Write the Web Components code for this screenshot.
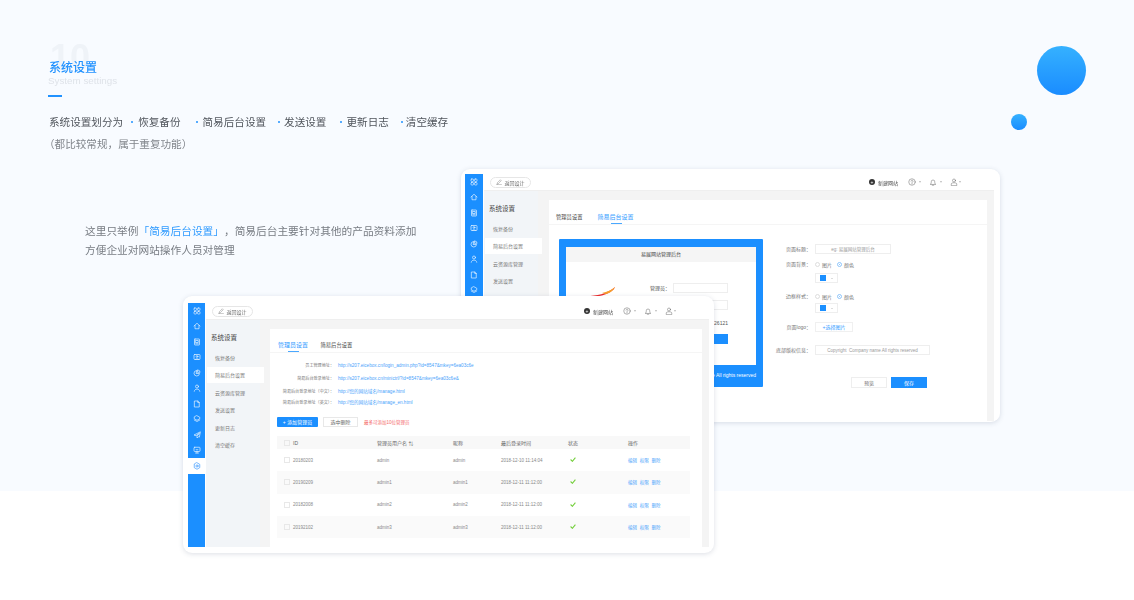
<!DOCTYPE html>
<html lang="zh-CN">
<head>
<meta charset="utf-8">
<title>系统设置</title>
<style>
  html, body { margin: 0; padding: 0; }
  body {
    width: 1134px; height: 600px; overflow: hidden; position: relative;
    font-family: "Liberation Sans", "Noto Sans CJK SC", sans-serif;
    background: linear-gradient(#f8fbff 0, #f8fbff 491px, #fff 491px);
  }
  #back { position: absolute; left: 461px; top: 169px; width: 539px; height: 253px; }
  #front { position: absolute; left: 183px; top: 296px; width: 531px; height: 257px; }
  .ball-a { position: absolute; left: 1037px; top: 46px; }
  .ball-b { position: absolute; left: 1011px; top: 114px; }
</style>
</head>
<body>
<section-intro></section-intro>
<deco-ball class="ball-a" size="49"></deco-ball>
<deco-ball class="ball-b" size="16"></deco-ball>

<admin-window id="back" active="-1" nav-active="1">
  <tab-strip slot="content" first="管理员设置" second="简易后台设置" active="1" height="25" left="7" gap="15"></tab-strip>
  <login-settings slot="content"></login-settings>
</admin-window>

<admin-window id="front" active="10" nav-active="1">
  <tab-strip slot="content" first="管理员设置" second="简易后台设置" active="0" height="24" left="8" gap="12.5"></tab-strip>
  <admin-list slot="content"></admin-list>
</admin-window>

<script>
const FONT = `"Liberation Sans", "Noto Sans CJK SC", sans-serif`
// 全角标点
const COLON = '\uFF1A', COMMA = '\uFF0C', LP = '\uFF08', RP = '\uFF09'

/* 图标都按 16x16 画,描边用 currentColor */
const ICONS = {
  grid: '<rect x="2" y="2" width="5" height="5" rx="1.5"/><rect x="9" y="2" width="5" height="5" rx="1.5"/><rect x="2" y="9" width="5" height="5" rx="1.5"/><rect x="9" y="9" width="5" height="5" rx="1.5"/>',
  home: '<path d="M2 8l6-5.5L14 8M4 7v6.5h8V7"/>',
  page: '<rect x="3" y="2" width="10" height="12" rx="1"/><rect x="5.5" y="5" width="5" height="4"/><path d="M5.5 11.5h5"/>',
  pic: '<rect x="2" y="3" width="12" height="10" rx="1.5"/><circle cx="8" cy="7" r="1.8"/><path d="M4 13c.6-2 7.4-2 8 0"/>',
  pie: '<path d="M7 3a5.5 5.5 0 1 0 6 6H7z"/><path d="M9.5 1.8a5 5 0 0 1 4.7 4.7H9.5z"/>',
  user: '<circle cx="8" cy="5" r="3"/><path d="M2.5 14.5c.5-6 10.5-6 11 0"/>',
  file: '<path d="M3.5 2h6l3 3v9h-9zM9.5 2v3h3"/>',
  layers: '<path d="M8 1.5l5.5 3v3L8 10.5l-5.5-3v-3zM2.5 10L8 13l5.5-3"/>',
  send: '<path d="M14 2L2 8l4 1.5L13 4l-5 6.5V14l2.5-2.5L12 12z"/>',
  chat: '<rect x="2" y="2.5" width="12" height="8.5" rx="1.5"/><path d="M8 11v3M5 14h6M6 6.5l2 2 2-2"/>',
  gear: '<path d="M8 1.5l5.5 3.2v6.6L8 14.5l-5.5-3.2V4.7z"/><circle cx="8" cy="8" r="2.2"/>',
  help: '<circle cx="8" cy="8" r="6.5"/><path d="M6 6.3c0-2.6 4-2.6 4 0 0 1.5-2 1.5-2 3.2M8 11v1"/>',
  bell: '<path d="M3 12.5c1.5-1 1.5-2.5 1.5-5a3.5 3.5 0 0 1 7 0c0 2.5 0 4 1.5 5zM6.5 14.5h3"/>',
  person: '<circle cx="8" cy="5" r="3"/><path d="M2.5 14.5V12c0-1.5 2-2.5 5.5-2.5s5.5 1 5.5 2.5v2.5z"/>',
  pen: '<path d="M3 13l1-3.5L11.5 2 14 4.5 6.5 12zM1.5 15h13"/>'
}
const icon = (name, size, width = 1.4) =>
  `<svg viewBox="0 0 16 16" width="${size}" height="${size}" fill="none" stroke="currentColor" stroke-width="${width}" stroke-linejoin="round" stroke-linecap="round">${ICONS[name]}</svg>`

class SectionIntro extends HTMLElement {
  constructor() {
    super()
    this.attachShadow({ mode: 'open' })
  }

  connectedCallback() {
    // [文字, 圆点到文字的距离, 到下一个圆点的距离]
    const items = [['恢复备份', 5, 15], ['简易后台设置', 5, 12], ['发送设置', 4, 14], ['更新日志', 4, 12], ['清空缓存', 3, 0]]
    this.shadowRoot.innerHTML = `
      <style>
        :host { display: block; padding: 41px 0 0 48px; font-family: ${FONT}; filter: blur(.25px); text-spacing-trim: space-all; }
        .no { font-size: 36px; line-height: 30px; height: 18px; padding: 2px 0 0 2px; font-weight: 700; color: #eff3f8; }
        h1 { position: relative; margin: 0; font-size: 12px; line-height: 14px; font-weight: 500; color: #2192ff; padding-left: 1px; }
        .en { position: relative; font-size: 9.8px; line-height: 14px; color: #dfe3e9; margin-top: -1px; }
        .rule { width: 14px; height: 2px; background: #2192ff; margin-top: 7px; }
        .line { display: flex; align-items: center; font-size: 10.6px; line-height: 16px; color: #50555c; margin: 17px 0 0 1px; }
        .lead { margin-right: 8px; }
        .dot { width: 2px; height: 2px; border-radius: 50%; background: #2192ff; flex: none; }
        .sub { font-size: 10.6px; line-height: 16px; color: #80858b; margin: 6px 0 0 -4px; }
        .desc { font-size: 10.7px; line-height: 19px; color: #777c83; margin: 70px 0 0 37px; }
        .desc b { font-weight: 400; color: #2f9bff; }
      </style>
      <div class="no">10</div>
      <h1>系统设置</h1>
      <div class="en">System settings</div>
      <div class="rule"></div>
      <div class="line">
        <span class="lead">系统设置划分为</span>
        ${items.map(([t, inner, gap]) => `<i class="dot" style="margin-right:${inner}px"></i><span style="margin-right:${gap}px">${t}</span>`).join('')}
      </div>
      <div class="sub">${LP}都比较常规${COMMA}属于重复功能${RP}</div>
      <div class="desc">这里只举例<b>「简易后台设置」</b>${COMMA}简易后台主要针对其他的产品资料添加<br>方便企业对网站操作人员对管理</div>
    `
  }
}

class DecoBall extends HTMLElement {
  constructor() {
    super()
    this.attachShadow({ mode: 'open' })
  }

  connectedCallback() {
    const size = this.getAttribute('size') || 16
    this.shadowRoot.innerHTML = `
      <style>
        :host { display: block; width: ${size}px; height: ${size}px; border-radius: 50%;
          background: linear-gradient(#35b1ff, #1a8cff); }
      </style>
    `
  }
}

class SideRail extends HTMLElement {
  constructor() {
    super()
    this.attachShadow({ mode: 'open' })
  }

  connectedCallback() {
    const active = Number(this.getAttribute('active'))
    const names = ['grid', 'home', 'page', 'pic', 'pie', 'user', 'file', 'layers', 'send', 'chat', 'gear']
    this.shadowRoot.innerHTML = `
      <style>
        :host { display: flex; flex-direction: column; align-items: stretch; background: #1b8fff; color: #e6f3ff; overflow: hidden; }
        div { height: 15.5px; display: flex; align-items: center; justify-content: center; flex: none; }
        div.on { background: #fff; color: #3d9bff; }
      </style>
      ${names.map((n, i) => `<div class="${i === active ? 'on' : ''}">${icon(n, 8)}</div>`).join('')}
    `
  }
}

class TopBar extends HTMLElement {
  constructor() {
    super()
    this.attachShadow({ mode: 'open' })
  }

  connectedCallback() {
    const caret = '<i class="caret"></i>'
    this.shadowRoot.innerHTML = `
      <style>
        :host { display: flex; align-items: center; height: 17px; background: #fff; padding: 0 0 0 6px; border-bottom: 1px solid #efefef;
          font-size: 5px; color: #555; box-sizing: border-box; }
        .pill { display: flex; align-items: center; justify-content: center; gap: 2px; width: 41px; height: 11px; box-sizing: border-box;
          border: 1px solid #e6e6e6; border-radius: 6px; color: #666; }
        .right { margin-left: auto; display: flex; align-items: center; color: #666; padding-right: 33px; }
        .plus { width: 6px; height: 6px; border-radius: 50%; background: #333; color: #fff; font-size: 5px; line-height: 6px; text-align: center; margin-right: 3px; }
        .new { margin-right: 10px; color: #444; }
        .caret { width: 0; height: 0; border: 1.5px solid transparent; border-top: 2px solid #bbb; border-bottom: 0; margin: 0 8px 0 3px; }
        .caret:last-child { margin-right: 0; margin-left: 1px; }
        svg { display: block; }
      </style>
      <div class="pill">${icon('pen', 6, 1)}<span>返回设计</span></div>
      <div class="right">
        <span class="plus">+</span><span class="new">新建网站</span>
        ${icon('help', 8, 1)}${caret}${icon('bell', 8, 1)}${caret}${icon('person', 8, 1)}${caret}
      </div>
    `
  }
}

class SideNav extends HTMLElement {
  constructor() {
    super()
    this.attachShadow({ mode: 'open' })
  }

  connectedCallback() {
    const active = Number(this.getAttribute('active'))
    const items = ['恢复备份', '简易后台设置', '云资源库管理', '发送设置', '更新日志', '清空缓存']
    this.shadowRoot.innerHTML = `
      <style>
        :host { display: block; background: #f2f5f8; font-size: 5px; color: #777; padding-top: 12.6px; }
        h2 { margin: 0 0 8.5px 5px; font-size: 6.5px; line-height: 9px; font-weight: 400; color: #444; }
        div { height: 15.5px; line-height: 16px; padding-left: 8px; margin: 0 -4px 1.9px 1px; }
        div.on { background: #fff; }
      </style>
      <h2>系统设置</h2>
      ${items.map((t, i) => `<div class="${i === active ? 'on' : ''}">${t}</div>`).join('')}
    `
  }
}

class AdminWindow extends HTMLElement {
  constructor() {
    super()
    this.attachShadow({ mode: 'open' })
  }

  connectedCallback() {
    const isBack = this.id === 'back'
    const padTop = isBack ? 5 : 7
    this.shadowRoot.innerHTML = `
      <style>
        :host { display: block; box-sizing: border-box; background: #fff; border-radius: 9px; padding: ${padTop}px 0 ${isBack ? 1 : 6}px ${isBack ? 4 : 5}px;
          box-shadow: 0 1px 5px rgba(60,80,110,.18); font-family: ${FONT}; overflow: hidden; filter: blur(.25px); }
        .frame { display: grid; grid-template-columns: ${isBack ? '18px' : '17px'} 1fr; column-gap: 1px; height: 100%; margin-right: ${isBack ? 6 : 5}px; }
        .main { display: flex; flex-direction: column; min-width: 0; min-height: 0; }
        .body { flex: 1; display: grid; grid-template-columns: 54px 1fr; min-height: 0; background: #f4f4f4; }
        .panel { background: #fff; margin: 9px 7px 0 ${isBack ? 11 : 10}px; min-height: 0; overflow: hidden; }
      </style>
      <div class="frame">
        <side-rail active="${this.getAttribute('active')}"></side-rail>
        <div class="main">
          <top-bar></top-bar>
          <div class="body">
            <side-nav active="${this.getAttribute('nav-active')}"></side-nav>
            <div class="panel"><slot name="content"></slot></div>
          </div>
        </div>
      </div>
    `
  }
}

class TabStrip extends HTMLElement {
  constructor() {
    super()
    this.attachShadow({ mode: 'open' })
  }

  connectedCallback() {
    const active = Number(this.getAttribute('active'))
    const tab = (text, i) => `<span class="tab ${i === active ? 'on' : ''}">${text}</span>`
    this.shadowRoot.innerHTML = `
      <style>
        :host { display: flex; align-items: center; gap: ${this.getAttribute('gap')}px; height: ${this.getAttribute('height')}px; box-sizing: border-box;
          padding: 9px 0 0 ${this.getAttribute('left')}px; border-bottom: 1px solid #f5f5f5; font-size: 5.3px; color: #444; }
        .tab { position: relative; line-height: 14px; }
        .on { color: #2f9bff; font-size: 6px; }
        .on::after { content: ''; position: absolute; left: 50%; margin-left: -5px; bottom: 0; width: 11px; height: 1px; background: #4aa8ff; }
      </style>
      ${tab(this.getAttribute('first'), 0)}${tab(this.getAttribute('second'), 1)}
    `
  }
}

class AdminList extends HTMLElement {
  constructor() {
    super()
    this.attachShadow({ mode: 'open' })
  }

  connectedCallback() {
    const urls = [
      [`员工管理地址${COLON}`, 'http://s207.eicebox.cn/login_admin.php?id=8547&mkey=6ea03c6e', 13],
      [`简易后台登录地址${COLON}`, 'http://s207.eicebox.cn/minictrl/?id=8547&mkey=6ea03c6e&', 12.5],
      [`简易后台登录地址${LP}中文${RP}${COLON}`, 'http://您的网站域名/manage.html', 11.5],
      [`简易后台登录地址${LP}英文${RP}${COLON}`, 'http://您的网站域名/manage_en.html', 11]
    ]
    const rows = [
      ['20180203', 'admin', 'admin', '2018-12-10 11:14:04'],
      ['20190209', 'admin1', 'admin1', '2018-12-11 11:12:00'],
      ['20182008', 'admin2', 'admin2', '2018-12-11 11:12:00'],
      ['20192102', 'admin3', 'admin3', '2018-12-11 11:12:00']
    ]
    const check = '<svg viewBox="0 0 10 8" width="6" height="5" fill="none" stroke="#74cf3c" stroke-width="1.8" style="margin-left:2px"><path d="M1 4l3 3 5-6"/></svg>'
    this.shadowRoot.innerHTML = `
      <style>
        :host { display: block; padding: 7px 12px 0 7px; font-size: 4.5px; color: #777; }
        .url { display: grid; grid-template-columns: 57px 1fr; column-gap: 4px; }
        .url span:first-child { text-align: right; color: #777; font-size: 4.1px; white-space: nowrap; }
        .url a { color: #4aa3fb; white-space: nowrap; font-size: 4.6px; }
        .url > * { line-height: 12px; height: var(--h); }
        .tools { display: flex; align-items: center; margin-top: 9px; height: 10px; }
        .add { width: 41px; height: 10px; line-height: 10px; background: #1b8fff; color: #fff; text-align: center; font-size: 5px; border-radius: 1px; }
        .del { width: 35px; height: 10px; line-height: 9px; border: 1px solid #e8e8e8; box-sizing: border-box; text-align: center; margin-left: 5px; color: #666; font-size: 5px; }
        .warn { margin-left: 6px; color: #f46a6a; }
        .row { display: grid; grid-template-columns: 9px 84px 76px 48px 67px 60px 1fr; align-items: center; padding-left: 7px; height: 22.3px; color: #888; }
        .head { height: 13px; margin-top: 9px; background: #f8f8f8; color: #666; font-size: 5px; }
        .alt { background: #fafafa; }
        .box { width: 4px; height: 4px; border: 1px solid #e8e8e8; }
        .ops { color: #4aa3fb; word-spacing: 1.5px; }
      </style>
      ${urls.map(([k, v, h]) => `<div class="url" style="--h:${h}px"><span>${k}</span><a>${v}</a></div>`).join('')}
      <div class="tools">
        <span class="add">+ 添加管理员</span><span class="del">选中删除</span><span class="warn">最多可添加10位管理员</span>
      </div>
      <div class="row head"><i class="box"></i><span>ID</span><span>管理员用户名 ⇅</span><span>昵称</span><span>最后登录时间</span><span>状态</span><span>操作</span></div>
      ${rows.map((r, i) => `<div class="row ${i % 2 ? 'alt' : ''}"><i class="box"></i><span>${r[0]}</span><span>${r[1]}</span><span>${r[2]}</span><span>${r[3]}</span><span>${check}</span><span class="ops">编辑 权限 删除</span></div>`).join('')}
    `
  }
}

class LoginSettings extends HTMLElement {
  constructor() {
    super()
    this.attachShadow({ mode: 'open' })
  }

  connectedCallback() {
    const radios = `<span class="radio"></span><span>图片</span><span class="radio on"></span><span>颜色</span>`
    const swatch = `<div class="swatch"><i></i><u></u></div>`
    this.shadowRoot.innerHTML = `
      <style>
        :host { display: grid; grid-template-columns: 204px 1fr; padding: 14px 0 0 10px; font-size: 5px; color: #777; }
        .preview { box-sizing: border-box; width: 204px; height: 148px; background: #1b8fff; padding: 8px 7px 0; border-radius: 1px; display: flex; flex-direction: column; }
        .card { background: #fff; height: 118px; flex: none; }
        .card h3 { margin: 0; height: 15px; line-height: 15px; background: #f5f5f5; text-align: center; font-size: 5px; font-weight: 400; color: #444; }
        .login { display: grid; grid-template-columns: 50px 36px 55px; grid-auto-rows: 17px; padding: 21px 28px 0 21px; }
        .flame { grid-column: 1; grid-row: 1 / 5; margin-top: 4px; }
        .k { grid-column: 2; line-height: 10px; color: #555; text-align: right; padding-right: 3px; white-space: nowrap; }
        .v { grid-column: 3; height: 10px; border: 1px solid #eee; box-sizing: border-box; }
        .code { grid-column: 3; text-align: right; line-height: 12px; color: #555; }
        .btn { grid-column: 3; height: 10px; background: #1b8fff; color: #fff; line-height: 10px; text-align: center; }
        .copy { color: #fff; text-align: right; line-height: 20px; font-size: 5px; white-space: nowrap; }
        .form { display: grid; grid-template-columns: 48px 1fr; column-gap: 4px; align-content: start; padding-top: 5px; }
        .form > span { text-align: right; line-height: 10px; white-space: nowrap; }
        .input { height: 10px; line-height: 9px; box-sizing: border-box; border: 1px solid #eee; text-align: center; color: #999; font-size: 4.5px; }
        .radios { display: flex; align-items: center; height: 10px; }
        .radio { width: 5px; height: 5px; border: .7px solid #ddd; border-radius: 50%; margin-right: 2px; box-sizing: border-box; flex: none; }
        .radio.on { border-color: #8ec5fb; background: radial-gradient(circle, #8ec5fb 30%, #fff 40%); margin-left: 5px; }
        .swatch { width: 23px; height: 10px; border: 1px solid #eee; box-sizing: border-box; display: flex; align-items: center; padding-left: 4px; gap: 5px; }
        .swatch i { width: 6px; height: 6px; background: #1b8fff; }
        .swatch u { border: 1px solid transparent; border-top: 1.5px solid #bbb; border-bottom: 0; }
        .pick { width: 38px; height: 10px; line-height: 9px; box-sizing: border-box; border: 1px solid #f0f0f0; text-align: center; color: #2f9bff; }
        .actions { display: flex; gap: 4px; margin: 22px 0 0 36px; }
        .actions span { width: 36px; height: 11px; line-height: 10px; text-align: center; box-sizing: border-box; border: 1px solid #eee; color: #777; }
        .actions .save { background: #1b8fff; border-color: #1b8fff; color: #fff; }
      </style>
      <div class="preview">
        <div class="card">
          <h3>易展网站管理后台</h3>
          <div class="login">
            <svg class="flame" viewBox="0 0 30 16" width="30" height="16">
              <path d="M0 9C9 9 20 7 28 0c-2 6-14 10-26 10z" fill="#ee2b2b"/>
              <path d="M15 6c5-1 10-3 13-6-1 3-5 6-9 7z" fill="#f6a02c"/>
            </svg>
            <div class="k">管理员${COLON}</div><div class="v"></div>
            <div class="k">密码${COLON}</div><div class="v"></div>
            <div class="code">26121</div>
            <div class="btn">登录</div>
          </div>
        </div>
        <div class="copy">Copyright Company name All rights reserved</div>
      </div>
      <div class="form">
        <span>页面标题${COLON}</span><div class="input" style="width:76px">eg: 易展网站管理后台</div>
        <span style="margin-top:5px">页面背景${COLON}</span><div class="radios" style="margin-top:5px">${radios}</div>
        <span></span><div style="margin-top:4px">${swatch}</div>
        <span style="margin-top:8px">边框样式${COLON}</span><div class="radios" style="margin-top:8px">${radios}</div>
        <span></span><div style="margin-top:2px">${swatch}</div>
        <span style="margin-top:9px">页面logo${COLON}</span><div style="margin-top:9px"><div class="pick">+选择图片</div></div>
        <span style="margin-top:13px">底部版权信息${COLON}</span><div class="input" style="width:115px;margin-top:13px">Copyright&nbsp; Company name All rights reserved</div>
        <span></span><div class="actions"><span>预览</span><span class="save">保存</span></div>
      </div>
    `
  }
}

customElements.define('section-intro', SectionIntro)
customElements.define('deco-ball', DecoBall)
customElements.define('side-rail', SideRail)
customElements.define('top-bar', TopBar)
customElements.define('side-nav', SideNav)
customElements.define('admin-window', AdminWindow)
customElements.define('tab-strip', TabStrip)
customElements.define('admin-list', AdminList)
customElements.define('login-settings', LoginSettings)
</script>
</body>
</html>
